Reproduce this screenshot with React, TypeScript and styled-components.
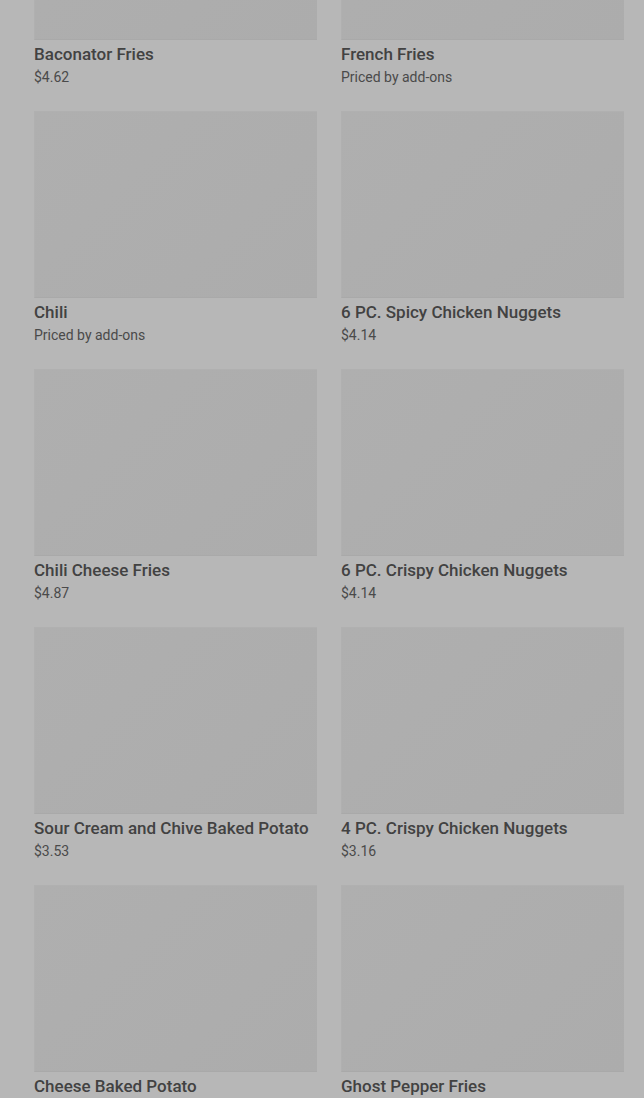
import React from 'react';
import styled, { createGlobalStyle } from 'styled-components';

const GlobalStyle = createGlobalStyle`
  html, body {
    margin: 0;
    padding: 0;
    height: 1098px;
    overflow: hidden;
    background: #b7b7b7;
  }
  body {
    font-family: Roboto, "Noto Sans", sans-serif;
  }
`;

interface MenuItem {
  name: string;
  price: string;
}

const items: MenuItem[] = [
  { name: 'Baconator Fries', price: '$4.62' },
  { name: 'French Fries', price: 'Priced by add-ons' },
  { name: 'Chili', price: 'Priced by add-ons' },
  { name: '6 PC. Spicy Chicken Nuggets', price: '$4.14' },
  { name: 'Chili Cheese Fries', price: '$4.87' },
  { name: '6 PC. Crispy Chicken Nuggets', price: '$4.14' },
  { name: 'Sour Cream and Chive Baked Potato', price: '$3.53' },
  { name: '4 PC. Crispy Chicken Nuggets', price: '$3.16' },
  { name: 'Cheese Baked Potato', price: '$4.30' },
  { name: 'Ghost Pepper Fries', price: '$3.57' },
];

export default function App() {
  return (
    <>
      <GlobalStyle />
      <Page>
        <Grid>
          {items.map((item) => (
            <Card key={item.name}>
              <Thumb />
              <Title>{item.name}</Title>
              <Price>{item.price}</Price>
            </Card>
          ))}
        </Grid>
      </Page>
    </>
  );
}

const Page = styled.div`
  width: 644px;
  height: 1098px;
  overflow: hidden;
  background: #b7b7b7;
`;

const Grid = styled.div`
  display: grid;
  grid-template-columns: 283px 283px;
  column-gap: 24px;
  row-gap: 25px;
  padding: 0 20px 0 34px;
  margin-top: -147px;
`;

const Card = styled.div`
  display: flex;
  flex-direction: column;
`;

const Thumb = styled.div`
  height: 187px;
  box-sizing: border-box;
  background: linear-gradient(135deg, #afafaf 0%, #acacac 100%);
  border-top: 1px solid #b0b0b0;
  border-left: 1px solid #b0b0b0;
  border-bottom: 1px solid #a9a9a9;
`;

const Title = styled.div`
  margin-top: 4px;
  font-size: 17px;
  line-height: 20px;
  font-weight: 500;
  color: #424242;
  white-space: nowrap;
`;

const Price = styled.div`
  margin-top: 4px;
  font-size: 14px;
  line-height: 18px;
  color: #4a4a4a;
`;
